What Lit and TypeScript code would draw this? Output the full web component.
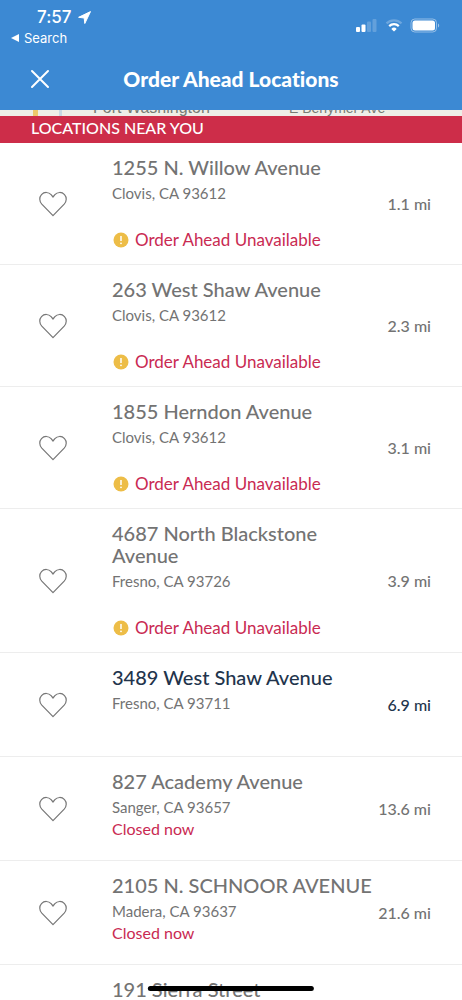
import { LitElement, html, css, svg, nothing } from "lit";
import { customElement, property } from "lit/decorators.js";
import { classMap } from "lit/directives/class-map.js";

interface Place {
  street: string;
  city: string;
  miles: string;
  status: "open" | "closed" | "unavailable";
}

const PLACES: Place[] = [
  { street: "1255 N. Willow Avenue", city: "Clovis, CA 93612", miles: "1.1 mi", status: "unavailable" },
  { street: "263 West Shaw Avenue", city: "Clovis, CA 93612", miles: "2.3 mi", status: "unavailable" },
  { street: "1855 Herndon Avenue", city: "Clovis, CA 93612", miles: "3.1 mi", status: "unavailable" },
  { street: "4687 North Blackstone Avenue", city: "Fresno, CA 93726", miles: "3.9 mi", status: "unavailable" },
  { street: "3489 West Shaw Avenue", city: "Fresno, CA 93711", miles: "6.9 mi", status: "open" },
  { street: "827 Academy Avenue", city: "Sanger, CA 93657", miles: "13.6 mi", status: "closed" },
  { street: "2105 N. SCHNOOR AVENUE", city: "Madera, CA 93637", miles: "21.6 mi", status: "closed" },
  { street: "191 Sierra Street", city: "", miles: "", status: "open" },
];

@customElement("status-bar")
export class StatusBar extends LitElement {
  static styles = css`
    :host {
      display: flex;
      justify-content: space-between;
      align-items: flex-start;
      padding: 6px 22px 0 11px;
      color: #fff;
      font-family: Inter, "Liberation Sans", sans-serif;
    }
    .clock {
      display: flex;
      align-items: center;
      gap: 6px;
      padding-left: 26px;
      font-size: 17px;
      font-weight: 500;
      line-height: 22px;
    }
    .back {
      display: flex;
      align-items: center;
      gap: 5px;
      color: inherit;
      font-size: 13px;
      line-height: 20px;
      text-decoration: none;
    }
    .signals {
      display: flex;
      align-items: center;
      gap: 7px;
      padding-top: 12px;
    }
    svg {
      display: block;
    }
  `;

  render() {
    return html`
      <div>
        <div class="clock">
          7:57
          <svg width="13" height="13" viewBox="0 0 13 13" aria-hidden="true">
            <path d="M12.500.6.600 6.300l5.600.7.600 5.500z" fill="#fff" stroke="#fff" stroke-linejoin="round" />
          </svg>
        </div>
        <a class="back" href="#search">
          <svg width="8" height="8" viewBox="0 0 8 8" aria-hidden="true"><path d="M8 0v8L0 4z" fill="#fff" /></svg>
          Search
        </a>
      </div>
      <div class="signals">
        <svg width="22" height="15" viewBox="0 0 22 15" aria-hidden="true">
          <rect x="0" y="9" width="4" height="5" rx="1" fill="#fff" />
          <rect x="5.500" y="6.500" width="4" height="7.500" rx="1" fill="#fff" />
          <rect x="11" y="3.500" width="4" height="10.500" rx="1" fill="#fff" opacity=".2" />
          <rect x="16.500" y="1" width="4" height="13" rx="1" fill="#fff" opacity=".2" />
        </svg>
        <svg width="18" height="15" viewBox="0 0 18 15" fill="none" aria-hidden="true">
          <path d="M1.500 5.400a10.600 10.600 0 0 1 15 0" stroke="#fff" stroke-width="2.200" opacity=".25" />
          <path d="M4.200 8.100a6.800 6.800 0 0 1 9.600 0" stroke="#fff" stroke-width="2.200" />
          <path d="M9 13.600 6.300 10.900a3.800 3.800 0 0 1 5.400 0z" fill="#fff" />
        </svg>
        <svg width="30" height="15" viewBox="0 0 30 15" aria-hidden="true">
          <rect x="1" y="1" width="25.500" height="13" rx="3.800" fill="none" stroke="#fff" opacity=".45" />
          <rect x="2.500" y="2.500" width="22.500" height="10" rx="2.500" fill="#fff" />
          <path d="M28 5.500c1.600.8 1.600 3.200 0 4z" fill="#fff" opacity=".5" />
        </svg>
      </div>
    `;
  }
}

@customElement("location-row")
export class LocationRow extends LitElement {
  @property({ attribute: false }) place!: Place;

  static styles = css`
    :host {
      display: block;
    }
    .row {
      box-sizing: border-box;
      display: grid;
      grid-template-columns: 28px minmax(0, 1fr) auto;
      align-items: center;
      min-height: 104px;
      padding: 13px 31px 13px 39px;
      border-bottom: 1px solid #ededed;
      color: #737373;
    }
    .heart {
      padding: 0;
      border: 0;
      background: none;
      cursor: pointer;
    }
    .heart svg {
      display: block;
    }
    .details {
      align-self: start;
      padding-left: 45px;
    }
    .street {
      margin: 0 0 4px;
      font-size: 20px;
      font-weight: 500;
      line-height: 22px;
    }
    .city,
    .status {
      margin: 0;
      font-size: 15px;
      line-height: 22px;
    }
    .status {
      color: #c92a52;
      font-size: 16px;
    }
    .unavailable {
      display: flex;
      align-items: center;
      gap: 6px;
      margin-top: 25px;
      font-size: 17px;
    }
    .miles {
      font-size: 16px;
      font-weight: 500;
      line-height: 22px;
    }
    .open .street,
    .open .miles {
      color: #22344c;
    }
  `;

  private renderStatus() {
    if (this.place.status === "open") return nothing;
    if (this.place.status === "closed") return html`<p class="status">Closed now</p>`;
    return html`
      <p class="status unavailable">
        <svg width="17" height="16" viewBox="0 0 17 16" aria-hidden="true">
          <circle cx="9" cy="8" r="7.500" fill="#edbd47" />
          <path d="M9 4v5" stroke="#fff" stroke-width="1.500" />
          <circle cx="9" cy="11.300" r=".9" fill="#fff" />
        </svg>
        Order Ahead Unavailable
      </p>
    `;
  }

  render() {
    const p = this.place;
    return html`
      <article class=${classMap({ row: true, open: p.status === "open" && p.miles !== "" })}>
        <button class="heart" aria-label="Save location">
          <svg width="28" height="26" viewBox="0 0 28 26" fill="none" aria-hidden="true">
            <path
              d="M14 24.700 2.800 13.200C.2 10.300.1 6.100 2.500 3.600 5.200.7 9.600.8 12.100 3.700L14 6l1.900-2.300c2.500-2.900 6.900-3 9.600-.1 2.400 2.500 2.300 6.700-.3 9.600z"
              stroke="#777"
              stroke-width="1.200"
              stroke-linejoin="round"
            />
          </svg>
        </button>
        <div class="details">
          <h2 class="street">${p.street}</h2>
          <p class="city">${p.city}</p>
          ${this.renderStatus()}
        </div>
        <span class="miles">${p.miles}</span>
      </article>
    `;
  }
}

@customElement("app-root")
export class AppRoot extends LitElement {
  static styles = css`
    :host {
      position: relative;
      display: flex;
      flex-direction: column;
      height: 100vh;
      overflow: hidden;
      background: #fff;
      font-family: Lato, "Open Sans", sans-serif;
      font-variant-ligatures: none;
    }
    .top {
      flex: none;
      background: #3c89d3;
    }
    .title-bar {
      display: grid;
      grid-template-columns: 20px 1fr 20px;
      align-items: center;
      height: 62px;
      padding: 0 30px;
      color: #fff;
    }
    .close {
      padding: 0;
      border: 0;
      background: none;
      cursor: pointer;
    }
    .close svg {
      display: block;
    }
    .title {
      margin: 0;
      font-size: 21px;
      font-weight: 900;
      line-height: 24px;
      text-align: center;
    }
    .map {
      flex: none;
      display: grid;
      grid-template-columns: 1fr 1fr;
      align-content: end;
      align-items: end;
      height: 6px;
      overflow: hidden;
      background: linear-gradient(90deg, transparent 33px, #edca6c 33px 38px, transparent 38px 59px, #c8d9e4 59px 62px, transparent 62px) #eeeee7;
      color: #777c75;
      font-family: "Liberation Sans", sans-serif;
      font-size: 16px;
      line-height: 16px;
    }
    .map-label {
      padding-left: 93px;
      white-space: nowrap;
    }
    .map-road {
      padding-left: 58px;
      font-size: 14px;
      white-space: nowrap;
    }
    .banner {
      flex: none;
      margin: 0;
      padding: 0 31px 3px;
      background: #cd2d49;
      color: #fff;
      font-size: 16px;
      font-weight: 500;
      line-height: 24px;
    }
    .list {
      flex: 1;
      min-height: 0;
      overflow-y: auto;
      scrollbar-width: none;
    }
    .home {
      position: absolute;
      bottom: 9px;
      left: 50%;
      width: 36%;
      height: 5px;
      border-radius: 3px;
      background: #000;
      transform: translateX(-50%);
    }
  `;

  render() {
    return html`
      <header class="top">
        <status-bar></status-bar>
        <div class="title-bar">
          <button class="close" aria-label="Close">
            <svg width="20" height="20" viewBox="0 0 20 20" aria-hidden="true">
              ${svg`<path d="M2 2 18 18M18 2 2 18" stroke="#fff" stroke-width="2" stroke-linecap="round" />`}
            </svg>
          </button>
          <h1 class="title">Order Ahead Locations</h1>
        </div>
      </header>
      <div class="map">
        <span class="map-label">Fort Washington</span>
        <span class="map-road">E Behymer Ave</span>
      </div>
      <h2 class="banner">LOCATIONS NEAR YOU</h2>
      <main class="list">${PLACES.map((p) => html`<location-row .place=${p}></location-row>`)}</main>
      <div class="home"></div>
    `;
  }
}
